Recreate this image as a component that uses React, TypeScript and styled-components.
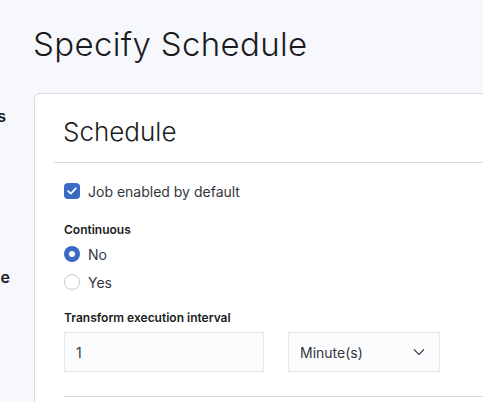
import React from "react";
import styled, { createGlobalStyle } from "styled-components";

const Global = createGlobalStyle`
  html, body { margin: 0; padding: 0; background: #f7f8fc; }
  body { font-family: Inter, "Noto Sans", sans-serif; color: #1a1c21; overflow: hidden; }
  * { box-sizing: border-box; }
`;

const Page = styled.div`
  display: flex;
  width: 483px;
  height: 402px;
  overflow: hidden;
`;

const Sidebar = styled.div`
  flex: 0 0 10px;
`;

const StepLabel = styled.div<{ $top: number; $w: number }>`
  width: ${(p) => p.$w}px;
  margin-top: ${(p) => p.$top}px;
  display: flex;
  justify-content: flex-end;
  overflow: hidden;
  white-space: nowrap;
  font-size: 16px;
  font-weight: 600;
  line-height: 24px;
  color: #1a1c21;
`;

const Main = styled.div`
  flex: 1 0 auto;
  padding: 24px 0 0 24px;
  display: flex;
  flex-direction: column;
`;

const PageTitle = styled.h1`
  margin: 0 0 0 -1px;
  font-size: 33px;
  font-weight: 300;
  line-height: 40px;
  letter-spacing: 0.35px;
  color: #1a1c21;
`;

const Panel = styled.div`
  flex: 0 0 auto;
  margin-top: 29px;
  width: 520px;
  background: #fff;
  border: 1px solid #d3dae6;
  border-radius: 6px;
  padding: 0 19px;
  height: 420px;
`;

const PanelHeader = styled.div`
  padding: 20px 10px 12px;
  border-bottom: 1px solid #d3dae6;
`;

const PanelTitle = styled.h2`
  margin: 0 0 0 -1px;
  font-size: 26px;
  font-weight: 300;
  line-height: 36px;
  color: #1a1c21;
`;

const PanelBody = styled.div`
  padding: 19px 10px 0;
  display: flex;
  flex-direction: column;
`;

const CheckRow = styled.label`
  display: flex;
  align-items: center;
  gap: 8px;
  height: 18px;
  font-size: 14px;
  color: #343741;
`;

const CheckBox = styled.span`
  width: 16px;
  height: 16px;
  border-radius: 4px;
  background: #3a6ac4;
  display: flex;
  align-items: center;
  justify-content: center;
`;

const FieldLabel = styled.div<{ $mt: number }>`
  margin-top: ${(p) => p.$mt}px;
  font-size: 12px;
  font-weight: 600;
  line-height: 18px;
  color: #1a1c21;
`;

const RadioRow = styled.label<{ $mt: number }>`
  margin-top: ${(p) => p.$mt}px;
  display: flex;
  align-items: center;
  gap: 8px;
  height: 24px;
  font-size: 14px;
  color: #343741;
`;

const Radio = styled.span<{ $on?: boolean }>`
  width: 16px;
  height: 16px;
  border-radius: 50%;
  background: ${(p) => (p.$on ? "#3a6ac4" : "#fff")};
  border: ${(p) => (p.$on ? "none" : "1px solid #c9cbd4")};
  display: flex;
  align-items: center;
  justify-content: center;
  &::after {
    content: "";
    display: ${(p) => (p.$on ? "block" : "none")};
    width: 6px;
    height: 6px;
    border-radius: 50%;
    background: #fff;
  }
`;

const InputRow = styled.div`
  margin-top: 5px;
  display: flex;
  gap: 24px;
`;

const Field = styled.div<{ $w: number }>`
  width: ${(p) => p.$w}px;
  height: 40px;
  background: #fbfcfd;
  border: 1px solid #e5e7ef;
  display: flex;
  align-items: center;
  justify-content: space-between;
  padding: 0 14px 0 11px;
  font-size: 14px;
  color: #343741;
`;

const Rule = styled.div`
  margin-top: 24px;
  height: 1px;
  background: #d3dae6;
`;

export default function App() {
  return (
    <>
      <Global />
      <Page>
        <Sidebar>
          <StepLabel $top={104} $w={6}>Details</StepLabel>
          <StepLabel $top={137} $w={10}>Schedule</StepLabel>
        </Sidebar>
        <Main>
          <PageTitle>Specify Schedule</PageTitle>
          <Panel>
            <PanelHeader>
              <PanelTitle>Schedule</PanelTitle>
            </PanelHeader>
            <PanelBody>
              <CheckRow>
                <CheckBox>
                  <svg width="10" height="8" viewBox="0 0 10 8" fill="none">
                    <path d="M1.2 4.2 L3.8 6.6 L8.8 1.4" stroke="#fff" strokeWidth="1.8" strokeLinecap="round" strokeLinejoin="round" />
                  </svg>
                </CheckBox>
                Job enabled by default
              </CheckRow>
              <FieldLabel $mt={21}>Continuous</FieldLabel>
              <RadioRow $mt={3}>
                <Radio $on />
                No
              </RadioRow>
              <RadioRow $mt={4}>
                <Radio />
                Yes
              </RadioRow>
              <FieldLabel $mt={15}>Transform execution interval</FieldLabel>
              <InputRow>
                <Field $w={200}>1</Field>
                <Field $w={152}>
                  Minute(s)
                  <svg width="12" height="8" viewBox="0 0 12 8" fill="none">
                    <path d="M1 1.5 L6 6.5 L11 1.5" stroke="#343741" strokeWidth="1.1" />
                  </svg>
                </Field>
              </InputRow>
              <Rule />
            </PanelBody>
          </Panel>
        </Main>
      </Page>
    </>
  );
}
